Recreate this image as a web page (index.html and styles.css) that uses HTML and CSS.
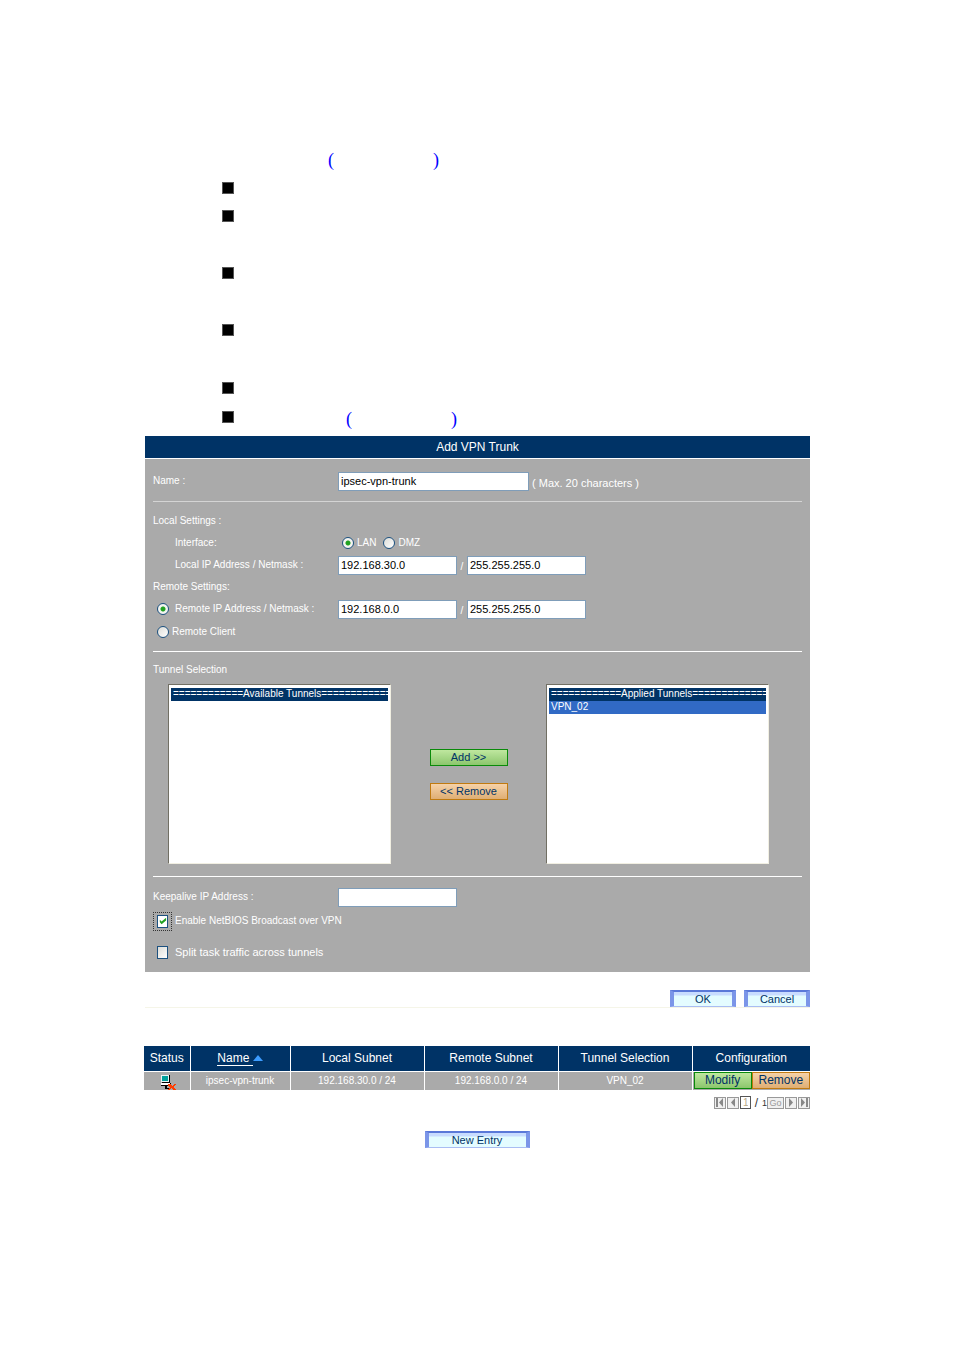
FILE: index.html
```
<!DOCTYPE html>
<html lang="en">
<head>
<meta charset="utf-8">
<title>Add VPN Trunk</title>
<link rel="stylesheet" href="styles.css">
</head>
<body>
<main class="page">
  <section class="notes">
    <p class="figure-ref"><span>(</span><span>)</span></p>
    <ul class="steps">
      <li></li>
      <li class="tall"></li>
      <li class="tall"></li>
      <li class="tall"></li>
      <li></li>
      <li><span class="figure-ref"><span>(</span><span>)</span></span></li>
    </ul>
  </section>

  <form class="trunk">
    <h1 class="trunk-title">Add VPN Trunk</h1>
    <div class="trunk-body">
      <div class="group group-name">
        <div class="row">
          <label class="label" for="name">Name :</label>
          <input class="text wide" id="name" type="text" value="ipsec-vpn-trunk">
          <span class="hint">( Max. 20 characters )</span>
        </div>
      </div>

      <div class="group group-nets">
        <div class="row">Local Settings :</div>
        <div class="row">
          <span class="label indent">Interface:</span>
          <span class="choices">
            <label class="choice"><input class="radio" type="radio" name="iface" checked>LAN</label>
            <label class="choice"><input class="radio" type="radio" name="iface">DMZ</label>
          </span>
        </div>
        <div class="row">
          <label class="label indent" for="local-ip">Local IP Address / Netmask :</label>
          <input class="text" id="local-ip" type="text" value="192.168.30.0">
          <span class="slash">/</span>
          <input class="text" type="text" aria-label="Local netmask" value="255.255.255.0">
        </div>
        <div class="row">Remote Settings:</div>
        <div class="row">
          <label class="label option-label"><input class="radio" type="radio" name="remote" checked>Remote IP Address / Netmask :</label>
          <input class="text" type="text" aria-label="Remote IP address" value="192.168.0.0">
          <span class="slash">/</span>
          <input class="text" type="text" aria-label="Remote netmask" value="255.255.255.0">
        </div>
        <div class="row last">
          <label class="label option-label close"><input class="radio" type="radio" name="remote">Remote Client</label>
        </div>
      </div>

      <div class="group group-tunnels">
        <div class="row">Tunnel Selection</div>
        <div class="picker">
          <select class="list" size="13" multiple aria-label="Available tunnels">
            <option class="list-head" disabled>============Available Tunnels============</option>
          </select>
          <div class="picker-actions">
            <button class="btn green" type="button">Add &gt;&gt;</button>
            <button class="btn orange" type="button">&lt;&lt; Remove</button>
          </div>
          <select class="list" size="13" multiple aria-label="Applied tunnels">
            <option class="list-head" disabled>============Applied Tunnels==============</option>
            <option class="picked">VPN_02</option>
          </select>
        </div>
      </div>

      <div class="group group-extra">
        <div class="row">
          <label class="label" for="keepalive">Keepalive IP Address :</label>
          <input class="text" id="keepalive" type="text">
        </div>
        <div class="row"><label class="tick"><span class="tick-box focused"><input class="check" type="checkbox" checked></span>Enable NetBIOS Broadcast over VPN</label></div>
        <div class="row large"><label class="tick"><span class="tick-box"><input class="check" type="checkbox"></span>Split task traffic across tunnels</label></div>
      </div>
    </div>
    <div class="form-actions">
      <button class="btn blue" type="button">OK</button>
      <button class="btn blue" type="button">Cancel</button>
    </div>
  </form>

  <section class="trunks">
    <table class="grid">
      <colgroup><col class="c-status"><col class="c-name"><col class="c-net"><col class="c-net"><col class="c-net"><col></colgroup>
      <thead>
        <tr>
          <th>Status</th>
          <th><a class="sort" href="#">Name&nbsp;</a><svg class="sort-icon" viewBox="0 0 10 6" aria-hidden="true"><path d="M5 0 10 6H0z" fill="#3c9cff"/></svg></th>
          <th>Local Subnet</th>
          <th>Remote Subnet</th>
          <th>Tunnel Selection</th>
          <th>Configuration</th>
        </tr>
      </thead>
      <tbody>
        <tr>
          <td>
            <svg class="status-icon" viewBox="0 0 15 15" shape-rendering="crispEdges" role="img" aria-label="Disconnected">
              <path d="M1 0h8v8H1z" fill="#000"/>
              <path d="M0 0h8v7H0z" fill="#e8f4f4"/>
              <path d="M1 1h6v5H1z" fill="#00a09c"/>
              <path d="M0 8h9v2H0z" fill="#fff"/>
              <path d="M0 10h9v1H0zM9 8h1v3H9zM4 11h2v3H4zM5 13h3v1H5z" fill="#000"/>
              <path d="M7 9h3v1h1v1h1v-1h1V9h2v1h-1v1h-1v2h1v1h1v1h-3v-1h-1v-1h-1v1H9v1H7v-1h1v-1h1v-1H8v-1H7z" fill="#ff3c00"/>
            </svg>
          </td>
          <td>ipsec-vpn-trunk</td>
          <td>192.168.30.0 / 24</td>
          <td>192.168.0.0 / 24</td>
          <td>VPN_02</td>
          <td class="config"><div class="config-actions"><button class="btn green" type="button">Modify</button><button class="btn orange" type="button">Remove</button></div></td>
        </tr>
      </tbody>
    </table>
    <nav class="pager" aria-label="Pages">
      <button class="page-btn" type="button" aria-label="First"><svg viewBox="0 0 8 9"><path d="M0 0h2v9H0zM7 0v9L3 4.5z"/></svg></button>
      <button class="page-btn" type="button" aria-label="Previous"><svg viewBox="0 0 8 9"><path d="M6 0v9L2 4.5z"/></svg></button>
      <input class="page-input" type="text" aria-label="Page" value="1">
      <span class="of">/</span><span class="total">1</span>
      <button class="page-btn go" type="button">Go</button>
      <button class="page-btn" type="button" aria-label="Next"><svg viewBox="0 0 8 9"><path d="M2 0v9l4-4.5z"/></svg></button>
      <button class="page-btn" type="button" aria-label="Last"><svg viewBox="0 0 8 9"><path d="M6 0h2v9H6zM1 0v9l4-4.5z"/></svg></button>
    </nav>
    <button class="btn blue new-entry" type="button">New Entry</button>
  </section>
</main>
</body>
</html>
```
FILE: styles.css
```
*, *::before { box-sizing: border-box; }

body {
  margin: 0;
  background: #fff;
  color: #fff;
  font: 11px/14px "Liberation Sans", Arial, sans-serif;
}

input, select, button { font: inherit; margin: 0; }

.page { padding: 150px 144px 200px; }

/* Notes */
.figure-ref {
  display: flex;
  gap: 99px;
  margin: 0 0 0 184px;
  color: #00f;
  font: 18px/20px "Liberation Serif", serif;
}
.steps { list-style: none; margin: 3px 0 0 78px; padding: 0; }
.steps li { display: flex; align-items: center; height: 29px; }
.steps li::before {
  content: "";
  width: 12px;
  height: 12px;
  background: #000;
  border: 1px solid #555;
}
.steps .tall { height: 57px; align-items: flex-start; padding-top: 8px; }
.steps .figure-ref { margin-left: 112px; padding-top: 4px; }

/* Form */
.trunk { margin: 5px 0 0; padding-left: 1px; }
.trunk-title {
  margin: 0;
  background: #036;
  font-size: 12px;
  font-weight: 400;
  line-height: 22px;
  text-align: center;
  border-bottom: 1px solid #fff;
}
.trunk-body { padding: 0 8px; background: #aaa; }
.group { border-bottom: 1px solid #fff; }
.group-name { padding: 11px 0 9px; border-color: #d4d4d4; }
.group-nets { padding: 8px 0 9px; }
.group-tunnels { padding: 7px 0 12px; }
.group-extra { padding: 9px 0; border: 0; }
.group-extra .row + .row { margin-top: 2px; }
.group-extra .row:last-child { margin-top: 9px; }
.row { display: flex; align-items: center; height: 22px; font-size: 10px; }
.last { padding-top: 2px; }
.large { font-size: 11px; }
.label { flex: 0 0 185px; }
.indent { padding-left: 22px; }
.option-label { display: flex; align-items: center; gap: 6px; padding-left: 4px; }
.close { gap: 3px; }
.hint { padding: 4px 0 0 3px; font-size: 11px; }
.text {
  width: 119px;
  height: 19px;
  padding: 0 2px;
  border: 1px solid #7f9db9;
  border-radius: 0;
  background: #fff;
  color: #000;
  font-size: 11px;
}
.wide { width: 191px; }
.slash { width: 10px; padding-top: 3px; text-align: center; }
.choices { display: flex; gap: 7px; padding-left: 4px; }
.choice { display: flex; align-items: center; gap: 3px; }
.radio {
  appearance: none;
  width: 12px;
  height: 12px;
  border: 1px solid #1c5180;
  border-radius: 50%;
  background: linear-gradient(135deg, #dcdcd7, #fff);
}
.radio:checked { background: radial-gradient(circle, #21a121 0 2px, #f4f4f0 3px); }

.picker { display: flex; justify-content: space-between; align-items: center; margin: 3px 33px 0 15px; }
.list {
  width: 223px;
  height: 180px;
  padding: 3px 2px 2px;
  overflow: hidden;
  border: 1px solid;
  border-color: #716f64 #f1efe2 #f1efe2 #716f64;
  border-radius: 0;
  background: #fff;
  outline: 0;
  font-size: 10px;
}
.list option { min-height: 13px; padding: 0 2px; line-height: 13px; color: #fff; }
.list .list-head { background: #036; color: #fff; }
.list .picked { background: #316ac5; }
.picker-actions { display: flex; flex-direction: column; gap: 17px; width: 78px; }

.btn {
  height: 17px;
  padding: 0;
  border: 1px solid;
  border-radius: 0;
  color: #036;
  line-height: 14px;
}
.green { background: linear-gradient(#bfe79f, #8cc66d); border-color: #0a8a0a; }
.orange { background: linear-gradient(#f5d2a8, #dfae74); border-color: #c07a10; }
.blue {
  width: 66px;
  border-width: 2px 4px 1px;
  border-color: #5a78d8 #7b95e8 #a9bdf2;
  background: linear-gradient(#c8dcff 0 3px, #e4fcff 4px);
}

.tick { display: flex; align-items: center; gap: 3px; }
.tick-box { display: flex; width: 19px; height: 19px; padding: 2px 3px; border: 1px dotted transparent; }
.focused { border-color: #333; }
.check {
  appearance: none;
  width: 12px;
  height: 13px;
  border: 1px solid #1c5180;
  background: linear-gradient(135deg, #dcdcd7, #fff);
}
.check:checked {
  background: #fff url("data:image/svg+xml,%3Csvg xmlns='http://www.w3.org/2000/svg' viewBox='0 0 10 11'%3E%3Cpath d='M2 4v3l2 2 5-4V2L4 6z' fill='%2321a121'/%3E%3C/svg%3E");
}

.form-actions {
  display: flex;
  justify-content: flex-end;
  gap: 8px;
  padding-top: 18px;
  border-bottom: 1px solid #f5f5e8;
}

/* Trunk table */
.trunks { display: flex; flex-direction: column; margin-top: 38px; }
.grid { width: 100%; table-layout: fixed; border-collapse: collapse; font-size: 10px; }
.c-status { width: 46px; }
.c-name { width: 100px; }
.c-net { width: 134px; }
.grid th, .grid td { padding: 0; text-align: center; }
.grid th + th, .grid td + td { border-left: 1px solid #fff; }
.grid th { height: 25px; border-bottom: 1px solid #fff; background: #036; font-size: 12px; font-weight: 400; }
.grid td { height: 19px; background: #aaa; }
.sort { color: #fff; text-decoration: none; border-bottom: 1px solid #fff; }
.sort-icon { width: 10px; height: 6px; margin-bottom: 1px; }
.status-icon { display: block; width: 15px; height: 15px; margin: 3px auto 0 17px; }
.grid .config { padding-left: 1px; vertical-align: top; font-size: 12px; }
.config-actions { display: grid; grid-template-columns: 1fr 1fr; }

.pager { display: flex; justify-content: flex-end; align-items: center; gap: 1px; height: 13px; margin-top: 6px; color: #333; }
.page-btn {
  display: flex;
  align-items: center;
  justify-content: center;
  width: 12px;
  height: 12px;
  padding: 0;
  border: 1px solid #999;
  background: #f0f0f0;
  color: #999;
}
.page-btn svg { width: 8px; height: 9px; fill: #888; }
.go { width: 17px; font-size: 9px; }
.page-input { width: 11px; height: 13px; padding: 0 2px; border: 1px solid #555; font-size: 10px; color: #b8a888; }
.of { width: 9px; text-align: center; font-size: 12px; }
.total { width: 4px; font-size: 9px; }
.new-entry { width: 105px; margin-top: 22px; align-self: center; }
```
